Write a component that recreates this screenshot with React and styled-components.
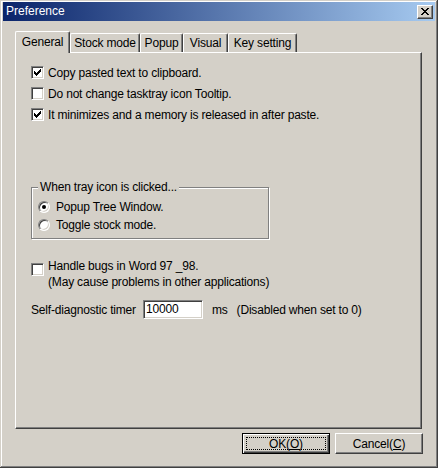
import React from "react";
import styled, { createGlobalStyle } from "styled-components";

const GlobalStyle = createGlobalStyle`
  html, body {
    margin: 0;
    padding: 0;
    background: #d4d0c8;
  }
  body {
    font-family: "Liberation Sans", Arial, sans-serif;
    font-size: 12px;
    letter-spacing: -0.18px;
    color: #000;
  }
`;

const Window = styled.div`
  width: 438px;
  height: 468px;
  box-sizing: border-box;
  padding: 2px 3px 3px;
  background: #d4d0c8;
  display: flex;
  flex-direction: column;
  box-shadow: inset -1px -1px 0 #404040, inset 1px 1px 0 #d4d0c8,
    inset -2px -2px 0 #808080, inset 2px 2px 0 #fff;
`;

const TitleBar = styled.div`
  height: 19px;
  display: flex;
  align-items: center;
  justify-content: space-between;
  padding: 0 2px 0 3px;
  background: linear-gradient(to right, #0a246a, #a6caf0);
`;

const Title = styled.span`
  color: #fff;
  font-size: 12px;
  line-height: 19px;
  letter-spacing: 0;
`;

const RaisedButton = styled.div`
  box-sizing: border-box;
  background: #d4d0c8;
  border: 1px solid;
  border-color: #fff #404040 #404040 #fff;
  box-shadow: inset -1px -1px 0 #808080;
`;

const CloseButton = styled(RaisedButton)`
  width: 16px;
  height: 14px;
  display: flex;
  align-items: center;
  justify-content: center;
`;

const Body = styled.div`
  flex: 1;
  display: flex;
  flex-direction: column;
  padding: 10px 13px 0 12px;
`;

const TabStrip = styled.div`
  display: flex;
  align-items: flex-end;
  height: 21px;
`;

const Tab = styled.div`
  box-sizing: border-box;
  width: ${(p) => p.$width}px;
  height: ${(p) => (p.$active ? 22 : 19)}px;
  margin-bottom: ${(p) => (p.$active ? -1 : 0)}px;
  display: flex;
  align-items: center;
  justify-content: center;
  padding-bottom: ${(p) => (p.$active ? 2 : 0)}px;
  background: #d4d0c8;
  border-top: 1px solid #fff;
  border-left: 1px solid #fff;
  border-right: 1px solid #404040;
  border-top-left-radius: 2px;
  border-top-right-radius: 2px;
  box-shadow: inset -1px 0 0 #808080;
  position: relative;
  z-index: ${(p) => (p.$active ? 1 : 0)};
  white-space: nowrap;
`;

const Panel = styled.div`
  box-sizing: border-box;
  height: 377px;
  border: 1px solid;
  border-color: #fff #404040 #404040 #fff;
  box-shadow: inset -1px -1px 0 #808080;
  padding: 9px 0 0 15px;
  display: flex;
  flex-direction: column;
`;

const CheckRow = styled.label`
  display: flex;
  align-items: ${(p) => (p.$top ? "flex-start" : "center")};
  gap: 4px;
  height: ${(p) => (p.$top ? "auto" : "21px")};
  margin-top: ${(p) => p.$mt || 0}px;
`;

const Box = styled.span`
  flex: none;
  box-sizing: border-box;
  width: 13px;
  height: 13px;
  background: #fff;
  border: 1px solid;
  border-color: #808080 #fff #fff #808080;
  box-shadow: inset 1px 1px 0 #404040, inset -1px -1px 0 #d4d0c8;
  margin-top: ${(p) => p.$mt || 0}px;
  svg {
    display: block;
  }
`;

const CHECK = [
  "......X",
  ".....XX",
  "X...XXX",
  "XX.XXX.",
  "XXXXX..",
  ".XXX...",
  "..X....",
];

const CheckBox = ({ checked, mt }) => (
  <Box $mt={mt}>
    {checked && (
      <svg width="11" height="11" viewBox="0 0 11 11" shapeRendering="crispEdges">
        {CHECK.flatMap((row, y) =>
          row.split("").map((c, x) =>
            c === "X" ? (
              <rect key={`${x}-${y}`} x={x + 2} y={y + 2} width="1" height="1" fill="#000" />
            ) : null
          )
        )}
      </svg>
    )}
  </Box>
);

const Label = styled.span`
  line-height: 16px;
  white-space: nowrap;
`;

const GroupBox = styled.div`
  width: 238px;
  box-sizing: border-box;
  margin-top: 62px;
  border: 1px solid #808080;
  box-shadow: inset 1px 1px 0 #fff, 1px 1px 0 #fff;
  padding: 0 0 4px 6px;
  display: flex;
  flex-direction: column;
`;

const GroupLabel = styled.div`
  width: fit-content;
  margin: -8px 0 4px 0;
  padding: 0 2px;
  line-height: 14px;
  background: #d4d0c8;
`;

const RadioRow = styled.label`
  display: flex;
  align-items: center;
  gap: 6px;
  height: 18px;
`;

const Radio = styled.span`
  flex: none;
  box-sizing: border-box;
  width: 12px;
  height: 12px;
  border-radius: 50%;
  background: #fff;
  border: 1px solid;
  border-color: #808080 #fff #fff #808080;
  box-shadow: inset 1px 1px 0 #404040, inset -1px -1px 0 #d4d0c8;
  display: flex;
  align-items: center;
  justify-content: center;
  &::after {
    content: "";
    width: 4px;
    height: 4px;
    border-radius: 50%;
    background: ${(p) => (p.$on ? "#000" : "transparent")};
  }
`;

const TimerRow = styled.div`
  display: flex;
  align-items: center;
  margin-top: 10px;
  height: 19px;
`;

const Field = styled.div`
  box-sizing: border-box;
  width: 60px;
  height: 19px;
  margin: 0 9px 0 7px;
  background: #fff;
  border: 1px solid;
  border-color: #808080 #fff #fff #808080;
  box-shadow: inset 1px 1px 0 #404040, inset -1px -1px 0 #d4d0c8;
  padding: 0 0 0 2px;
  line-height: 17px;
`;

const Note = styled.span`
  margin-left: 9px;
  white-space: nowrap;
`;

const ButtonRow = styled.div`
  display: flex;
  justify-content: flex-end;
  gap: 5px;
  margin: 4px -1px 0 0;
`;

const DialogButton = styled(RaisedButton)`
  width: 88px;
  height: 21px;
  display: flex;
  align-items: center;
  justify-content: center;
  ${(p) =>
    p.$default &&
    `
    border: 1px solid #000;
    box-shadow: inset 1px 1px 0 #fff, inset -1px -1px 0 #404040, inset -2px -2px 0 #808080;
    padding: 3px;
  `}
`;

const Focus = styled.span`
  flex: 1;
  align-self: stretch;
  display: flex;
  align-items: center;
  justify-content: center;
  border: 1px dotted #000;
`;

const U = styled.span`
  text-decoration: underline;
`;

export default function App() {
  return (
    <>
      <GlobalStyle />
      <Window>
        <TitleBar>
          <Title>Preference</Title>
          <CloseButton>
            <svg width="8" height="7" viewBox="0 0 8 7" shapeRendering="crispEdges">
              <path
                d="M0 0h2v1h-2zM6 0h2v1h-2zM1 1h2v1h-2zM5 1h2v1h-2zM2 2h4v1h-4zM3 3h2v1h-2zM2 4h4v1h-4zM1 5h2v1h-2zM5 5h2v1h-2zM0 6h2v1h-2zM6 6h2v1h-2z"
                fill="#000"
              />
            </svg>
          </CloseButton>
        </TitleBar>
        <Body>
          <TabStrip>
            <Tab $active $width={55}>General</Tab>
            <Tab $width={70}>Stock mode</Tab>
            <Tab $width={43}>Popup</Tab>
            <Tab $width={45}>Visual</Tab>
            <Tab $width={69}>Key setting</Tab>
          </TabStrip>
          <Panel>
            <CheckRow>
              <CheckBox checked />
              <Label>Copy pasted text to clipboard.</Label>
            </CheckRow>
            <CheckRow>
              <CheckBox />
              <Label>Do not change tasktray icon Tooltip.</Label>
            </CheckRow>
            <CheckRow>
              <CheckBox checked />
              <Label>It minimizes and a memory is released in after paste.</Label>
            </CheckRow>
            <GroupBox>
              <GroupLabel>When tray icon is clicked...</GroupLabel>
              <RadioRow>
                <Radio $on />
                <Label>Popup Tree Window.</Label>
              </RadioRow>
              <RadioRow>
                <Radio />
                <Label>Toggle stock mode.</Label>
              </RadioRow>
            </GroupBox>
            <CheckRow $top $mt={19}>
              <CheckBox mt={5} />
              <Label>
                Handle bugs in Word 97 _98.
                <br />
                (May cause problems in other applications)
              </Label>
            </CheckRow>
            <TimerRow>
              <Label>Self-diagnostic timer</Label>
              <Field>10000</Field>
              <Label>ms</Label>
              <Note>(Disabled when set to 0)</Note>
            </TimerRow>
          </Panel>
          <ButtonRow>
            <DialogButton $default>
              <Focus>
                OK(<U>O</U>)
              </Focus>
            </DialogButton>
            <DialogButton>
              Cancel(<U>C</U>)
            </DialogButton>
          </ButtonRow>
        </Body>
      </Window>
    </>
  );
}
